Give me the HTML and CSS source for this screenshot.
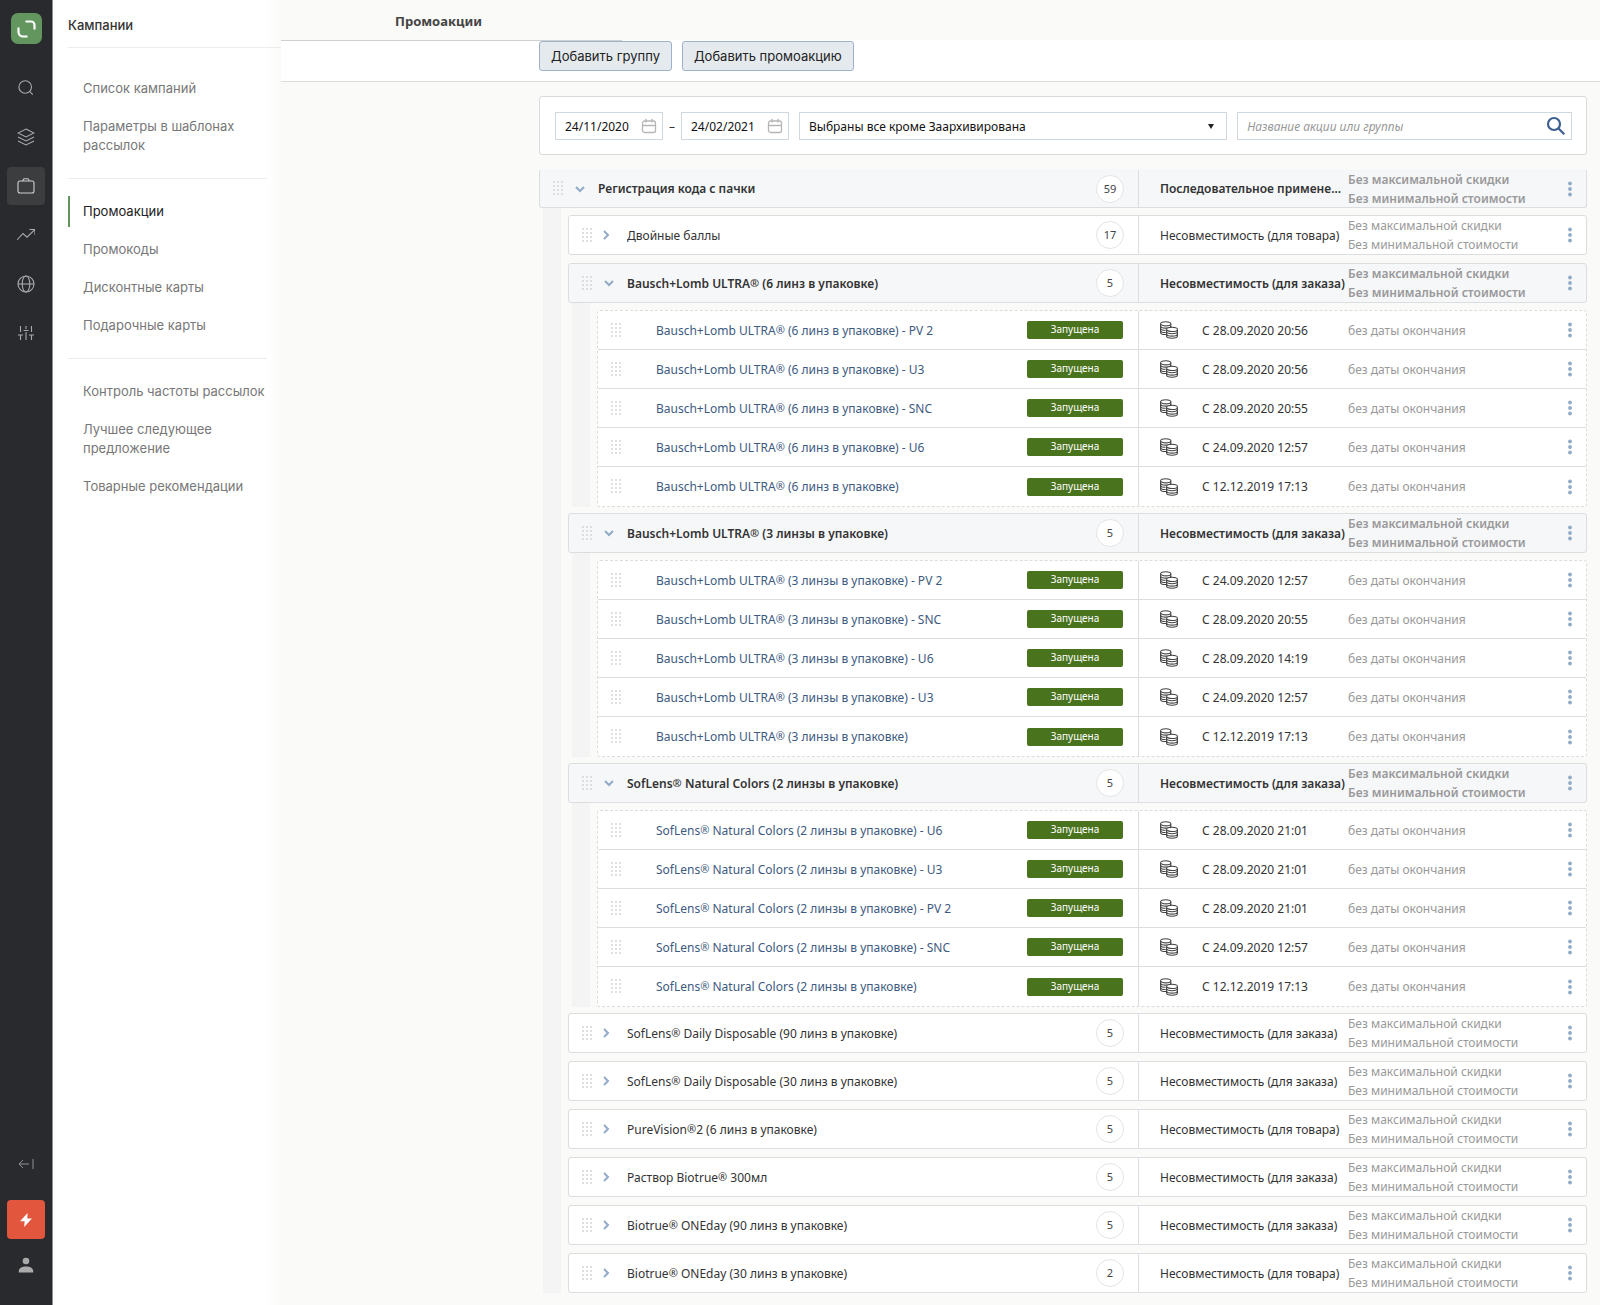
FILE: index.html
```
<!DOCTYPE html>
<html lang="ru">
<head>
<meta charset="utf-8">
<title>Промоакции</title>
<link rel="stylesheet" href="styles.css">
</head>
<body>
<svg class="defs" aria-hidden="true">
  <symbol id="drag" viewBox="0 0 11 15"><path d="M1 1h10M1 5h10M1 9h10M1 13h10" fill="none" stroke="currentColor" stroke-width="2" stroke-linecap="round" stroke-dasharray="0 4"/></symbol>
  <symbol id="down" viewBox="0 0 12 12"><path d="M2 4l4 4 4-4" fill="none" stroke="currentColor" stroke-width="2"/></symbol>
  <symbol id="right" viewBox="0 0 12 12"><path d="M4 2l4 4-4 4" fill="none" stroke="currentColor" stroke-width="2"/></symbol>
  <symbol id="dots" viewBox="0 0 4 16"><circle cx="2" cy="2.5" r="1.9"/><circle cx="2" cy="8" r="1.9"/><circle cx="2" cy="13.5" r="1.9"/></symbol>
  <symbol id="coins" viewBox="0 0 18 18"><g stroke="currentColor" stroke-width="1.1"><path d="M.6 2.8v8.6c0 1.2 2.3 2.1 5.1 2.1s5.1-.9 5.1-2.1V2.8" fill="#fff"/><ellipse cx="5.7" cy="2.8" rx="5.1" ry="2.1" fill="#fff"/><path d="M.6 5c0 1.2 2.3 2.1 5.1 2.1S10.800 6.200 10.800 5M.6 7.200c0 1.2 2.3 2.100 5.100 2.100M.6 9.400c0 1.200 2.300 2.100 5.100 2.100" fill="none"/><path d="M6.600 8.400v6.700c0 1.200 2.400 2.200 5.400 2.200s5.400-1 5.400-2.200V8.400" fill="#fff"/><ellipse cx="12" cy="8.400" rx="5.400" ry="2.100" fill="#fff"/><path d="M6.600 10.600c0 1.200 2.400 2.200 5.400 2.200s5.400-1 5.400-2.200M6.600 12.900c0 1.200 2.400 2.200 5.400 2.200s5.400-1 5.400-2.200" fill="none"/></g></symbol>
  <symbol id="calendar" viewBox="0 0 16 16"><path d="M3.500 3h9A2 2 0 0 1 14.500 5v7.500a2 2 0 0 1-2 2h-9a2 2 0 0 1-2-2V5a2 2 0 0 1 2-2zM1.500 7.500h13M5 .8v3.700M11 .8v3.700" fill="none" stroke="currentColor" stroke-width="1.300"/></symbol>
</svg>

<div class="app">
  <nav class="rail" aria-label="Разделы">
    <a class="logo" href="#" aria-label="Главная"><svg viewBox="0 0 31 31"><path d="M14.500 8.500H20a3.500 3.500 0 0 1 3.500 3.500v4.500M7.500 14.500V19a4.500 4.500 0 0 0 4.500 4.500h4.500" fill="none" stroke="#fff" stroke-width="2.200"/></svg></a>
    <a class="rail-link" href="#" aria-label="Поиск"><svg viewBox="0 0 18 18"><circle cx="8.200" cy="8" r="6.300"/><path d="M12.800 12.600l3 3"/></svg></a>
    <a class="rail-link" href="#" aria-label="Слои"><svg viewBox="0 0 18 18"><path d="M9 1l8 4-8 4-8-4zM1 9l8 4 8-4M1 13l8 4 8-4"/></svg></a>
    <a class="rail-link active" href="#" aria-label="Кампании"><svg viewBox="0 0 18 18"><rect x="1" y="4" width="16" height="12" rx="2"/><path d="M6 4V3.500A1.800 1.800 0 0 1 7.800 1.700h2.400A1.800 1.800 0 0 1 12 3.500V4"/></svg></a>
    <a class="rail-link" href="#" aria-label="Аналитика"><svg viewBox="0 0 18 18"><path d="M0 14l6-6.500 4 3.700L18 3.500M12.500 3.500H18V9"/></svg></a>
    <a class="rail-link" href="#" aria-label="Сайты"><svg viewBox="0 0 18 18"><circle cx="9" cy="9" r="8"/><ellipse cx="9" cy="9" rx="3.800" ry="8"/><path d="M1 9h16"/></svg></a>
    <a class="rail-link" href="#" aria-label="Настройки"><svg viewBox="0 0 18 18"><path d="M3.500 2v6M3.500 11v5M1 11h5M9 2v3M9 8v8M6.500 6.500h5M14.500 2v6M14.500 11v5M12 11h5"/></svg></a>
    <div class="rail-foot">
      <button class="collapse" aria-label="Свернуть"><svg viewBox="0 0 16 16"><path d="M11 8H1M5 4L1 8l4 4M15 3v10"/></svg></button>
      <button class="flash" aria-label="Быстрые действия"><svg viewBox="0 0 12 14"><path d="M7.600 0L0 8.200h4.600L4.200 14 12 5.600H7.300z"/></svg></button>
      <a class="user" href="#" aria-label="Профиль"><svg viewBox="0 0 16 16"><circle cx="8" cy="4" r="3.300"/><path d="M.8 15.500v-1.300C.8 11 4.500 9.600 8 9.600s7.200 1.400 7.200 4.600v1.300z"/></svg></a>
    </div>
  </nav>

  <aside class="side">
    <h2 class="side-title">Кампании</h2>
    <ul class="menu">
      <li><a href="#">Список кампаний</a></li>
      <li><a href="#">Параметры в шаблонах рассылок</a></li>
    </ul>
    <ul class="menu">
      <li class="current"><a href="#">Промоакции</a></li>
      <li><a href="#">Промокоды</a></li>
      <li><a href="#">Дисконтные карты</a></li>
      <li><a href="#">Подарочные карты</a></li>
    </ul>
    <ul class="menu">
      <li><a class="nowrap" href="#">Контроль частоты рассылок</a></li>
      <li><a href="#">Лучшее следующее предложение</a></li>
      <li><a href="#">Товарные рекомендации</a></li>
    </ul>
  </aside>

  <main class="main">
    <h1 class="page-title">Промоакции</h1>
    <div class="toolbar">
      <button class="btn">Добавить группу</button>
      <button class="btn">Добавить промоакцию</button>
    </div>

    <div class="content">
      <form class="filters">
        <label class="field date"><input type="text" value="24/11/2020" aria-label="Дата начала"><svg><use href="#calendar"/></svg></label>
        <span class="dash">–</span>
        <label class="field date"><input type="text" value="24/02/2021" aria-label="Дата окончания"><svg><use href="#calendar"/></svg></label>
        <label class="field status-filter"><select aria-label="Статус"><option>Выбраны все кроме Заархивирована</option></select><svg viewBox="0 0 6 5"><path d="M0 0h6L3 5z"/></svg></label>
        <label class="field search"><input type="text" placeholder="Название акции или группы" aria-label="Поиск"><svg viewBox="0 0 20 20"><circle cx="8" cy="8" r="6"/><path d="M12.300 12.300l6 6"/></svg></label>
      </form>

      <section class="root">
        <div class="row open top">
          <svg class="drag"><use href="#drag"/></svg><svg class="chev"><use href="#down"/></svg><span class="name">Регистрация кода с пачки</span><span class="count">59</span>
          <div class="info"><span class="rule">Последовательное примене...</span><span class="limits">Без максимальной скидки<br>Без минимальной стоимости</span><button class="more" aria-label="Меню"><svg><use href="#dots"/></svg></button></div>
        </div>
        <div class="children groups">
          <div class="row">
            <svg class="drag"><use href="#drag"/></svg><svg class="chev"><use href="#right"/></svg><span class="name">Двойные баллы</span><span class="count">17</span>
            <div class="info"><span class="rule">Несовместимость (для товара)</span><span class="limits">Без максимальной скидки<br>Без минимальной стоимости</span><button class="more" aria-label="Меню"><svg><use href="#dots"/></svg></button></div>
          </div>

          <section class="group">
            <div class="row open">
              <svg class="drag"><use href="#drag"/></svg><svg class="chev"><use href="#down"/></svg><span class="name">Bausch+Lomb ULTRA<sup>®</sup> (6 линз в упаковке)</span><span class="count">5</span>
              <div class="info"><span class="rule">Несовместимость (для заказа)</span><span class="limits">Без максимальной скидки<br>Без минимальной стоимости</span><button class="more" aria-label="Меню"><svg><use href="#dots"/></svg></button></div>
            </div>
            <div class="children">
              <table class="promos">
                <tr><td class="c-name"><svg class="drag"><use href="#drag"/></svg><a href="#">Bausch+Lomb ULTRA<sup>®</sup> (6 линз в упаковке) - PV 2</a></td><td class="c-status"><span class="badge">Запущена</span></td><td class="c-type"><svg><use href="#coins"/></svg></td><td class="c-start">С 28.09.2020 20:56</td><td class="c-end">без даты окончания</td><td class="c-more"><button class="more" aria-label="Меню"><svg><use href="#dots"/></svg></button></td></tr>
                <tr><td class="c-name"><svg class="drag"><use href="#drag"/></svg><a href="#">Bausch+Lomb ULTRA<sup>®</sup> (6 линз в упаковке) - U3</a></td><td class="c-status"><span class="badge">Запущена</span></td><td class="c-type"><svg><use href="#coins"/></svg></td><td class="c-start">С 28.09.2020 20:56</td><td class="c-end">без даты окончания</td><td class="c-more"><button class="more" aria-label="Меню"><svg><use href="#dots"/></svg></button></td></tr>
                <tr><td class="c-name"><svg class="drag"><use href="#drag"/></svg><a href="#">Bausch+Lomb ULTRA<sup>®</sup> (6 линз в упаковке) - SNC</a></td><td class="c-status"><span class="badge">Запущена</span></td><td class="c-type"><svg><use href="#coins"/></svg></td><td class="c-start">С 28.09.2020 20:55</td><td class="c-end">без даты окончания</td><td class="c-more"><button class="more" aria-label="Меню"><svg><use href="#dots"/></svg></button></td></tr>
                <tr><td class="c-name"><svg class="drag"><use href="#drag"/></svg><a href="#">Bausch+Lomb ULTRA<sup>®</sup> (6 линз в упаковке) - U6</a></td><td class="c-status"><span class="badge">Запущена</span></td><td class="c-type"><svg><use href="#coins"/></svg></td><td class="c-start">С 24.09.2020 12:57</td><td class="c-end">без даты окончания</td><td class="c-more"><button class="more" aria-label="Меню"><svg><use href="#dots"/></svg></button></td></tr>
                <tr><td class="c-name"><svg class="drag"><use href="#drag"/></svg><a href="#">Bausch+Lomb ULTRA<sup>®</sup> (6 линз в упаковке)</a></td><td class="c-status"><span class="badge">Запущена</span></td><td class="c-type"><svg><use href="#coins"/></svg></td><td class="c-start">С 12.12.2019 17:13</td><td class="c-end">без даты окончания</td><td class="c-more"><button class="more" aria-label="Меню"><svg><use href="#dots"/></svg></button></td></tr>
              </table>
            </div>
          </section>

          <section class="group">
            <div class="row open">
              <svg class="drag"><use href="#drag"/></svg><svg class="chev"><use href="#down"/></svg><span class="name">Bausch+Lomb ULTRA<sup>®</sup> (3 линзы в упаковке)</span><span class="count">5</span>
              <div class="info"><span class="rule">Несовместимость (для заказа)</span><span class="limits">Без максимальной скидки<br>Без минимальной стоимости</span><button class="more" aria-label="Меню"><svg><use href="#dots"/></svg></button></div>
            </div>
            <div class="children">
              <table class="promos">
                <tr><td class="c-name"><svg class="drag"><use href="#drag"/></svg><a href="#">Bausch+Lomb ULTRA<sup>®</sup> (3 линзы в упаковке) - PV 2</a></td><td class="c-status"><span class="badge">Запущена</span></td><td class="c-type"><svg><use href="#coins"/></svg></td><td class="c-start">С 24.09.2020 12:57</td><td class="c-end">без даты окончания</td><td class="c-more"><button class="more" aria-label="Меню"><svg><use href="#dots"/></svg></button></td></tr>
                <tr><td class="c-name"><svg class="drag"><use href="#drag"/></svg><a href="#">Bausch+Lomb ULTRA<sup>®</sup> (3 линзы в упаковке) - SNC</a></td><td class="c-status"><span class="badge">Запущена</span></td><td class="c-type"><svg><use href="#coins"/></svg></td><td class="c-start">С 28.09.2020 20:55</td><td class="c-end">без даты окончания</td><td class="c-more"><button class="more" aria-label="Меню"><svg><use href="#dots"/></svg></button></td></tr>
                <tr><td class="c-name"><svg class="drag"><use href="#drag"/></svg><a href="#">Bausch+Lomb ULTRA<sup>®</sup> (3 линзы в упаковке) - U6</a></td><td class="c-status"><span class="badge">Запущена</span></td><td class="c-type"><svg><use href="#coins"/></svg></td><td class="c-start">С 28.09.2020 14:19</td><td class="c-end">без даты окончания</td><td class="c-more"><button class="more" aria-label="Меню"><svg><use href="#dots"/></svg></button></td></tr>
                <tr><td class="c-name"><svg class="drag"><use href="#drag"/></svg><a href="#">Bausch+Lomb ULTRA<sup>®</sup> (3 линзы в упаковке) - U3</a></td><td class="c-status"><span class="badge">Запущена</span></td><td class="c-type"><svg><use href="#coins"/></svg></td><td class="c-start">С 24.09.2020 12:57</td><td class="c-end">без даты окончания</td><td class="c-more"><button class="more" aria-label="Меню"><svg><use href="#dots"/></svg></button></td></tr>
                <tr><td class="c-name"><svg class="drag"><use href="#drag"/></svg><a href="#">Bausch+Lomb ULTRA<sup>®</sup> (3 линзы в упаковке)</a></td><td class="c-status"><span class="badge">Запущена</span></td><td class="c-type"><svg><use href="#coins"/></svg></td><td class="c-start">С 12.12.2019 17:13</td><td class="c-end">без даты окончания</td><td class="c-more"><button class="more" aria-label="Меню"><svg><use href="#dots"/></svg></button></td></tr>
              </table>
            </div>
          </section>

          <section class="group">
            <div class="row open">
              <svg class="drag"><use href="#drag"/></svg><svg class="chev"><use href="#down"/></svg><span class="name">SofLens<sup>®</sup> Natural Colors (2 линзы в упаковке)</span><span class="count">5</span>
              <div class="info"><span class="rule">Несовместимость (для заказа)</span><span class="limits">Без максимальной скидки<br>Без минимальной стоимости</span><button class="more" aria-label="Меню"><svg><use href="#dots"/></svg></button></div>
            </div>
            <div class="children">
              <table class="promos">
                <tr><td class="c-name"><svg class="drag"><use href="#drag"/></svg><a href="#">SofLens<sup>®</sup> Natural Colors (2 линзы в упаковке) - U6</a></td><td class="c-status"><span class="badge">Запущена</span></td><td class="c-type"><svg><use href="#coins"/></svg></td><td class="c-start">С 28.09.2020 21:01</td><td class="c-end">без даты окончания</td><td class="c-more"><button class="more" aria-label="Меню"><svg><use href="#dots"/></svg></button></td></tr>
                <tr><td class="c-name"><svg class="drag"><use href="#drag"/></svg><a href="#">SofLens<sup>®</sup> Natural Colors (2 линзы в упаковке) - U3</a></td><td class="c-status"><span class="badge">Запущена</span></td><td class="c-type"><svg><use href="#coins"/></svg></td><td class="c-start">С 28.09.2020 21:01</td><td class="c-end">без даты окончания</td><td class="c-more"><button class="more" aria-label="Меню"><svg><use href="#dots"/></svg></button></td></tr>
                <tr><td class="c-name"><svg class="drag"><use href="#drag"/></svg><a href="#">SofLens<sup>®</sup> Natural Colors (2 линзы в упаковке) - PV 2</a></td><td class="c-status"><span class="badge">Запущена</span></td><td class="c-type"><svg><use href="#coins"/></svg></td><td class="c-start">С 28.09.2020 21:01</td><td class="c-end">без даты окончания</td><td class="c-more"><button class="more" aria-label="Меню"><svg><use href="#dots"/></svg></button></td></tr>
                <tr><td class="c-name"><svg class="drag"><use href="#drag"/></svg><a href="#">SofLens<sup>®</sup> Natural Colors (2 линзы в упаковке) - SNC</a></td><td class="c-status"><span class="badge">Запущена</span></td><td class="c-type"><svg><use href="#coins"/></svg></td><td class="c-start">С 24.09.2020 12:57</td><td class="c-end">без даты окончания</td><td class="c-more"><button class="more" aria-label="Меню"><svg><use href="#dots"/></svg></button></td></tr>
                <tr><td class="c-name"><svg class="drag"><use href="#drag"/></svg><a href="#">SofLens<sup>®</sup> Natural Colors (2 линзы в упаковке)</a></td><td class="c-status"><span class="badge">Запущена</span></td><td class="c-type"><svg><use href="#coins"/></svg></td><td class="c-start">С 12.12.2019 17:13</td><td class="c-end">без даты окончания</td><td class="c-more"><button class="more" aria-label="Меню"><svg><use href="#dots"/></svg></button></td></tr>
              </table>
            </div>
          </section>

          <div class="row">
            <svg class="drag"><use href="#drag"/></svg><svg class="chev"><use href="#right"/></svg><span class="name">SofLens<sup>®</sup> Daily Disposable (90 линз в упаковке)</span><span class="count">5</span>
            <div class="info"><span class="rule">Несовместимость (для заказа)</span><span class="limits">Без максимальной скидки<br>Без минимальной стоимости</span><button class="more" aria-label="Меню"><svg><use href="#dots"/></svg></button></div>
          </div>
          <div class="row">
            <svg class="drag"><use href="#drag"/></svg><svg class="chev"><use href="#right"/></svg><span class="name">SofLens<sup>®</sup> Daily Disposable (30 линз в упаковке)</span><span class="count">5</span>
            <div class="info"><span class="rule">Несовместимость (для заказа)</span><span class="limits">Без максимальной скидки<br>Без минимальной стоимости</span><button class="more" aria-label="Меню"><svg><use href="#dots"/></svg></button></div>
          </div>
          <div class="row">
            <svg class="drag"><use href="#drag"/></svg><svg class="chev"><use href="#right"/></svg><span class="name">PureVision<sup>®</sup>2 (6 линз в упаковке)</span><span class="count">5</span>
            <div class="info"><span class="rule">Несовместимость (для товара)</span><span class="limits">Без максимальной скидки<br>Без минимальной стоимости</span><button class="more" aria-label="Меню"><svg><use href="#dots"/></svg></button></div>
          </div>
          <div class="row">
            <svg class="drag"><use href="#drag"/></svg><svg class="chev"><use href="#right"/></svg><span class="name">Раствор Biotrue<sup>®</sup> 300мл</span><span class="count">5</span>
            <div class="info"><span class="rule">Несовместимость (для заказа)</span><span class="limits">Без максимальной скидки<br>Без минимальной стоимости</span><button class="more" aria-label="Меню"><svg><use href="#dots"/></svg></button></div>
          </div>
          <div class="row">
            <svg class="drag"><use href="#drag"/></svg><svg class="chev"><use href="#right"/></svg><span class="name">Biotrue<sup>®</sup> ONEday (90 линз в упаковке)</span><span class="count">5</span>
            <div class="info"><span class="rule">Несовместимость (для заказа)</span><span class="limits">Без максимальной скидки<br>Без минимальной стоимости</span><button class="more" aria-label="Меню"><svg><use href="#dots"/></svg></button></div>
          </div>
          <div class="row">
            <svg class="drag"><use href="#drag"/></svg><svg class="chev"><use href="#right"/></svg><span class="name">Biotrue<sup>®</sup> ONEday (30 линз в упаковке)</span><span class="count">2</span>
            <div class="info"><span class="rule">Несовместимость (для товара)</span><span class="limits">Без максимальной скидки<br>Без минимальной стоимости</span><button class="more" aria-label="Меню"><svg><use href="#dots"/></svg></button></div>
          </div>
        </div>
      </section>
    </div>
  </main>
</div>
</body>
</html>
```
FILE: styles.css
```
* { box-sizing: border-box; }

body {
  margin: 0;
  background: #fafaf8;
  color: #333;
  font: 12px/19px "Noto Sans", "Open Sans", sans-serif;
}

a { color: inherit; text-decoration: none; }
button { padding: 0; border: 0; background: none; font: inherit; cursor: pointer; }
ul { margin: 0; padding: 0; list-style: none; }
.defs { display: none; }
sup { font-size: 11px; line-height: 0; vertical-align: 1px; }

.app { display: flex; min-height: 100vh; }

/* Icon rail */
.rail {
  flex: none;
  display: flex;
  flex-direction: column;
  align-items: center;
  gap: 11px;
  width: 53px;
  padding: 13px 0 24px;
  border-right: 1px solid #8d8e90;
  background: #292a2e;
}
.rail svg { display: block; }
.logo { width: 31px; height: 31px; margin-bottom: 14px; border-radius: 7px; background: #63965f; }
.rail-link { display: grid; place-items: center; width: 38px; height: 38px; border-radius: 4px; }
.rail-link svg { width: 18px; height: 18px; fill: none; stroke: #a9aaab; stroke-width: 1.1; }
.rail-link.active { background: #3c3d3e; }
.rail-link.active svg { stroke: #d0d0d0; }
.rail-foot { display: flex; flex-direction: column; align-items: center; margin-top: auto; }
.collapse svg { width: 16px; height: 16px; margin-bottom: 28px; fill: none; stroke: #8f9092; }
.flash { display: grid; place-items: center; width: 38px; height: 39px; margin-bottom: 18px; border-radius: 4px; background: #e1563d; }
.flash svg { width: 12px; height: 14px; fill: #fff; }
.user svg { width: 16px; height: 16px; margin-bottom: 8px; fill: #a9aaa9; }

/* Section menu */
.side {
  flex: none;
  width: 228px;
  padding-left: 15px;
  background: linear-gradient(to right, #fff 214px, #fafaf8 228px);
  color: #777;
  font: 13px/19px Inter, sans-serif;
}
.side-title { margin: 0; padding: 16px 0 12px; border-bottom: 1px solid #ececec; color: #333; font-size: 13px; font-weight: 500; line-height: 19px; }
.menu { display: grid; gap: 19px; width: 199px; padding: 23px 0; border-bottom: 1px solid #ececec; }
.side-title + .menu { padding-top: 31px; }
.menu:last-child { border: 0; }
.menu a { display: block; padding-left: 15px; }
.menu .nowrap { white-space: nowrap; }
.current { margin: -6px 0; padding: 6px 0; border-left: 2px solid #63965f; color: #222; }
.menu .current a { padding-left: 13px; }

/* Page */
.main { flex: 1; min-width: 0; }
.page-title { margin: 0; padding: 11px 114px 9px; color: #444; font-size: 13px; font-weight: 700; line-height: 20px; }
.toolbar {
  display: flex;
  gap: 10px;
  height: 42px;
  padding: 1px 0 0 258px;
  border-bottom: 1px solid #dcddda;
  background: linear-gradient(#cfd1cf, #cfd1cf) 0 0 / 341px 1px no-repeat #fff;
}
.btn { height: 30px; padding: 0 11px; border: 1px solid #9fb1c8; border-radius: 3px; background: #e5eaee; color: #222; font: 13px Inter, sans-serif; }
.content { padding: 14px 13px 8px 258px; }

/* Filters */
.filters { display: flex; align-items: center; margin-bottom: 14px; padding: 15px 14px 14px 15px; border: 1px solid #d9dadb; border-radius: 3px; background: #fff; }
.field { display: flex; align-items: center; height: 28px; border: 1px solid #cfd8df; background: #fff; }
.field input, .field select { flex: 1; min-width: 0; width: 0; height: 26px; padding: 0 9px; border: 0; outline: 0; background: none; color: #111; font: inherit; appearance: none; }
.date { flex: none; width: 108px; }
.date input { padding-right: 0; }
.date svg { width: 16px; height: 16px; margin-right: 5px; color: #b5b6b5; }
.dash { width: 18px; text-align: center; }
.status-filter { flex: 429; margin: 0 10px; }
.status-filter svg { width: 6px; height: 5px; margin-right: 12px; fill: #222; }
.search { flex: 335; }
.search input::placeholder { color: #999; font-style: italic; opacity: 1; }
.search svg { width: 20px; height: 20px; margin-right: 5px; fill: none; stroke: #3c5f90; stroke-width: 2.2; }

/* Group rows */
.row { display: flex; align-items: center; height: 40px; border: 1px solid #dcddde; border-radius: 3px; background: #fff; }
.open { background: #f6f7f9; font-weight: 600; }
.top { height: 39px; border-top-color: transparent; }
.drag { flex: none; width: 11px; height: 15px; margin: 0 10px 0 13px; color: #d3d5d6; }
.chev { flex: none; width: 12px; height: 12px; margin-right: 12px; color: #92abc6; }
.row:not(.open) .chev { margin: 0 15px 0 -3px; }
.name { flex: 1; min-width: 0; overflow: hidden; white-space: nowrap; text-overflow: ellipsis; }
.count { flex: none; width: 28px; height: 28px; margin-right: 14px; border: 1px solid #e2e4e5; border-radius: 50%; background: #fff; color: #444; font-size: 11px; font-weight: 400; line-height: 26px; text-align: center; }
.info { flex: none; display: flex; align-items: center; align-self: stretch; width: 448px; padding: 0 12px 0 21px; border-left: 1px solid #dcddde; }
.rule { width: 188px; white-space: nowrap; }
.limits { flex: 1; color: #999; }
.more { display: grid; place-items: center; width: 8px; height: 20px; }
.more svg { display: block; width: 4px; height: 16px; fill: #92abc6; }

/* Nesting */
.children { padding: 7px 0 0 29px; background: linear-gradient(#f3f4f3, #f3f4f3) 4px 0 / 18px 100% no-repeat; }
.groups > .row { margin-bottom: 8px; }
.group { margin-bottom: 6px; }
.groups > :last-child { margin-bottom: 0; }

/* Promotions */
.promos { width: 100%; table-layout: fixed; border: 1px dashed #dcddda; border-radius: 3px; border-spacing: 0; background: #fff; }
.promos td { height: 39px; padding: 0; border-bottom: 1px solid #dcdddd; vertical-align: middle; }
.promos tr:last-child td { border-bottom: 0; }
.promos svg { display: block; }
.promos td.c-name { display: flex; align-items: center; color: #3d5a80; }
.c-name .drag { margin-right: 34px; }
.promos td.c-status { width: 112px; border-right: 1px solid #dcddde; }
.badge { display: block; width: 96px; height: 18px; border-radius: 2px; background: #4a731d; color: #fff; font-size: 10px; line-height: 17px; text-align: center; }
.promos td.c-type { width: 63px; padding-left: 21px; }
.c-type svg { width: 18px; height: 18px; color: #444; }
.promos td.c-start { width: 146px; }
.promos td.c-end { width: 218px; color: #999; }
.c-more { width: 20px; }
```
